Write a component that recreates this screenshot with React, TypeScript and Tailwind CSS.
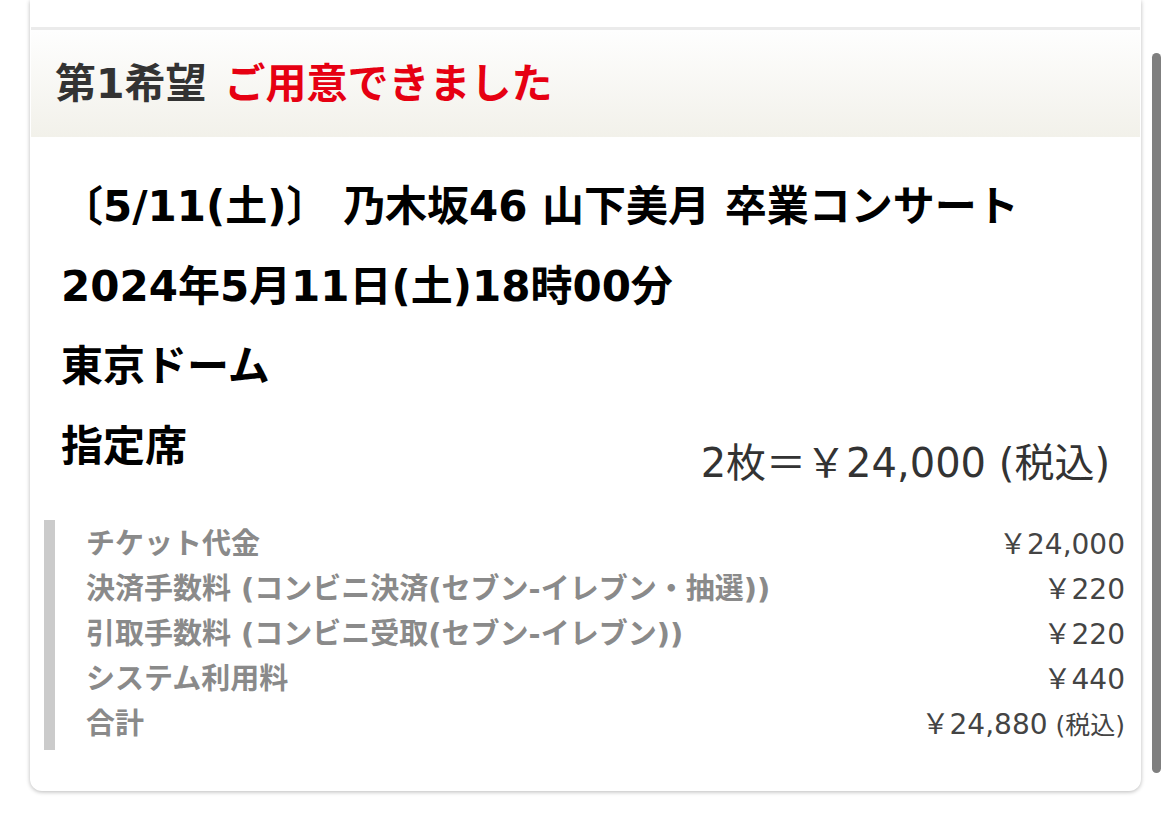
import React from "react";

const font = {
  fontFamily: '"DejaVu Sans", "Noto Sans CJK JP", "Noto Sans", sans-serif',
};

const rows = [
  { label: "チケット代金", value: "￥24,000", note: "" },
  { label: "決済手数料 (コンビニ決済(セブン-イレブン・抽選))", value: "￥220", note: "" },
  { label: "引取手数料 (コンビニ受取(セブン-イレブン))", value: "￥220", note: "" },
  { label: "システム利用料", value: "￥440", note: "" },
  { label: "合計", value: "￥24,880", note: " (税込)" },
];

export default function App() {
  return (
    <main
      className="relative h-[820px] w-[1169px] overflow-hidden bg-white"
      style={font}
    >
      {/* Card */}
      <div className="ml-[30px] w-[1111px] rounded-b-[12px] bg-white shadow-[0_1px_4px_rgba(0,0,0,0.28)]">
        <div className="h-[27px]" />
        <div className="mx-[1px] h-[3px] bg-[#ebebeb]" />

        {/* Header */}
        <div className="mx-[1px] flex h-[107px] items-center gap-[18px] bg-gradient-to-b from-[#fefefe] to-[#f2f1ea] pl-[24px] pt-[2px] text-[41px] font-bold">
          <span className="text-[#333333]">第1希望</span>
          <span className="text-[#e60012]">ご用意できました</span>
        </div>

        {/* Body */}
        <div className="px-[31px] pt-[30px] text-[42px] font-bold leading-[80px] text-black">
          <div>〔5/11(土)〕 乃木坂46 山下美月 卒業コンサート</div>
          <div>2024年5月11日(土)18時00分</div>
          <div>東京ドーム</div>
          <div className="flex justify-between">
            <span>指定席</span>
            <span className="pt-[16px] text-[40px] font-normal text-[#333333]">
              2枚＝￥24,000 (税込)
            </span>
          </div>
        </div>

        {/* Breakdown */}
        <div className="ml-[14px] mr-[16px] mt-[17px] flex">
          <div className="w-[11px] bg-[#cbcbcb]" />
          <div className="flex-1 pb-[2px] pl-[31px] pt-[2px] leading-[45px]">
            {rows.map((r) => (
              <div key={r.label} className="flex justify-between">
                <span className="text-[29px] font-bold text-[#8a8a8a]">{r.label}</span>
                <span className="text-[28px] text-[#444444]">
                  {r.value}
                  {r.note && <span className="text-[25px]">{r.note}</span>}
                </span>
              </div>
            ))}
          </div>
        </div>
        <div className="h-[41px]" />
      </div>

      {/* scroll indicator */}
      <div className="absolute left-[1152px] top-[53px] h-[720px] w-[9px] rounded-full bg-[#7f7f7f]" />
    </main>
  );
}
